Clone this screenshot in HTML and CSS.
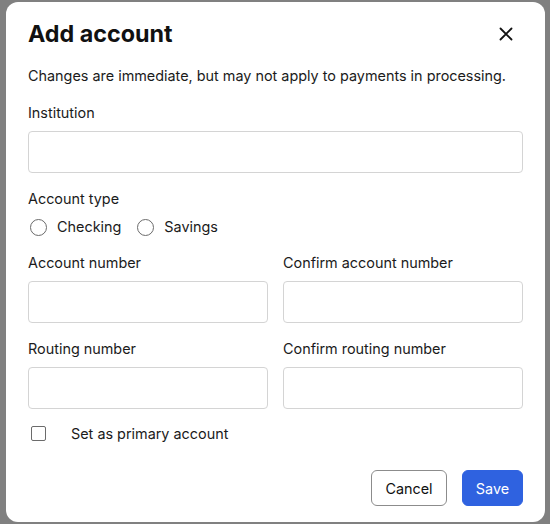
FILE: index.html
```html
<!DOCTYPE html>
<html lang="en">
<head>
<meta charset="utf-8">
<title>Add account</title>
<link rel="stylesheet" href="styles.css">
</head>
<body>
<div class="backdrop">
  <div class="dialog" role="dialog" aria-labelledby="dlg-title">
    <div class="dialog-header">
      <h1 id="dlg-title" class="dialog-title">Add account</h1>
      <button class="close-btn" aria-label="Close">
        <svg width="14" height="14" viewBox="0 0 14 14"><path d="M1.5 1.5 L12.5 12.5 M12.5 1.5 L1.5 12.5" stroke="#111" stroke-width="1.8" stroke-linecap="round" fill="none"/></svg>
      </button>
    </div>
    <p class="note">Changes are immediate, but may not apply to payments in processing.</p>

    <div class="field">
      <label class="field-label">Institution</label>
      <input class="text-input" type="text">
    </div>

    <div class="field">
      <span class="field-label">Account type</span>
      <div class="radio-row">
        <label class="radio"><span class="radio-dot"></span>Checking</label>
        <label class="radio"><span class="radio-dot"></span>Savings</label>
      </div>
    </div>

    <div class="pair">
      <div class="field">
        <label class="field-label">Account number</label>
        <input class="text-input" type="text">
      </div>
      <div class="field">
        <label class="field-label">Confirm account number</label>
        <input class="text-input" type="text">
      </div>
    </div>

    <div class="pair">
      <div class="field">
        <label class="field-label">Routing number</label>
        <input class="text-input" type="text">
      </div>
      <div class="field">
        <label class="field-label">Confirm routing number</label>
        <input class="text-input" type="text">
      </div>
    </div>

    <label class="check-row"><span class="check-box"></span>Set as primary account</label>

    <div class="actions">
      <button class="btn btn-secondary">Cancel</button>
      <button class="btn btn-primary">Save</button>
    </div>
  </div>
</div>
</body>
</html>
```

FILE: styles.css
```css
* { box-sizing: border-box; }

html, body {
  margin: 0;
  height: 100%;
}

body {
  font-family: Inter, "Noto Sans", sans-serif;
  color: #1b1b1b;
  background: #808080;
}

.backdrop {
  height: 100%;
  display: flex;
  align-items: center;
  justify-content: flex-start;
  padding: 0 5px 0 6px;
}

.dialog {
  width: 539px;
  background: #fff;
  border-radius: 12px;
  padding: 16px 22px 16px 22px;
  display: flex;
  flex-direction: column;
  gap: 16px;
}

.dialog-header {
  display: flex;
  align-items: center;
  justify-content: space-between;
  height: 32px;
}

.dialog-title {
  margin: 0;
  font-size: 23.3px;
  font-weight: 700;
  line-height: 32px;
  color: #111;
}

.close-btn {
  border: 0;
  background: none;
  padding: 0;
  width: 14px;
  height: 14px;
  margin-right: 10px;
  display: flex;
}

.note {
  margin: 0 0 1px;
  font-size: 14.4px;
  line-height: 20px;
}

.field {
  display: flex;
  flex-direction: column;
  gap: 8px;
  min-width: 0;
}

.field-label {
  font-size: 14.4px;
  line-height: 20px;
}

.text-input {
  height: 42px;
  width: 100%;
  border: 1px solid #d4d4d4;
  border-radius: 4px;
  background: #fff;
  font: inherit;
  padding: 0 10px;
}

.radio-row {
  display: flex;
  gap: 16px;
  height: 20px;
  padding-left: 2px;
}

.radio {
  display: flex;
  align-items: center;
  gap: 10px;
  font-size: 14.4px;
  line-height: 20px;
}

.radio-dot {
  width: 17px;
  height: 17px;
  border: 1.5px solid #6b6b6b;
  border-radius: 50%;
}

.pair {
  display: grid;
  grid-template-columns: 1fr 1fr;
  gap: 15px;
}

.check-row {
  display: flex;
  align-items: center;
  gap: 25px;
  height: 20px;
  padding-left: 3px;
  font-size: 14.4px;
  margin-top: -2px;
}

.check-box {
  width: 15px;
  height: 15px;
  border: 1.5px solid #6b6b6b;
  border-radius: 2px;
}

.actions {
  display: flex;
  justify-content: flex-end;
  gap: 15px;
  margin-top: 11px;
}

.btn {
  height: 36px;
  border-radius: 6px;
  font-family: inherit;
  font-size: 14.4px;
  padding: 0;
}

.btn-secondary {
  background: #fff;
  border: 1px solid #8c8c8c;
  color: #111;
  width: 76px;
}

.btn-primary {
  background: #2f62e0;
  border: 1px solid #2f62e0;
  color: #fff;
  width: 61px;
}
```
